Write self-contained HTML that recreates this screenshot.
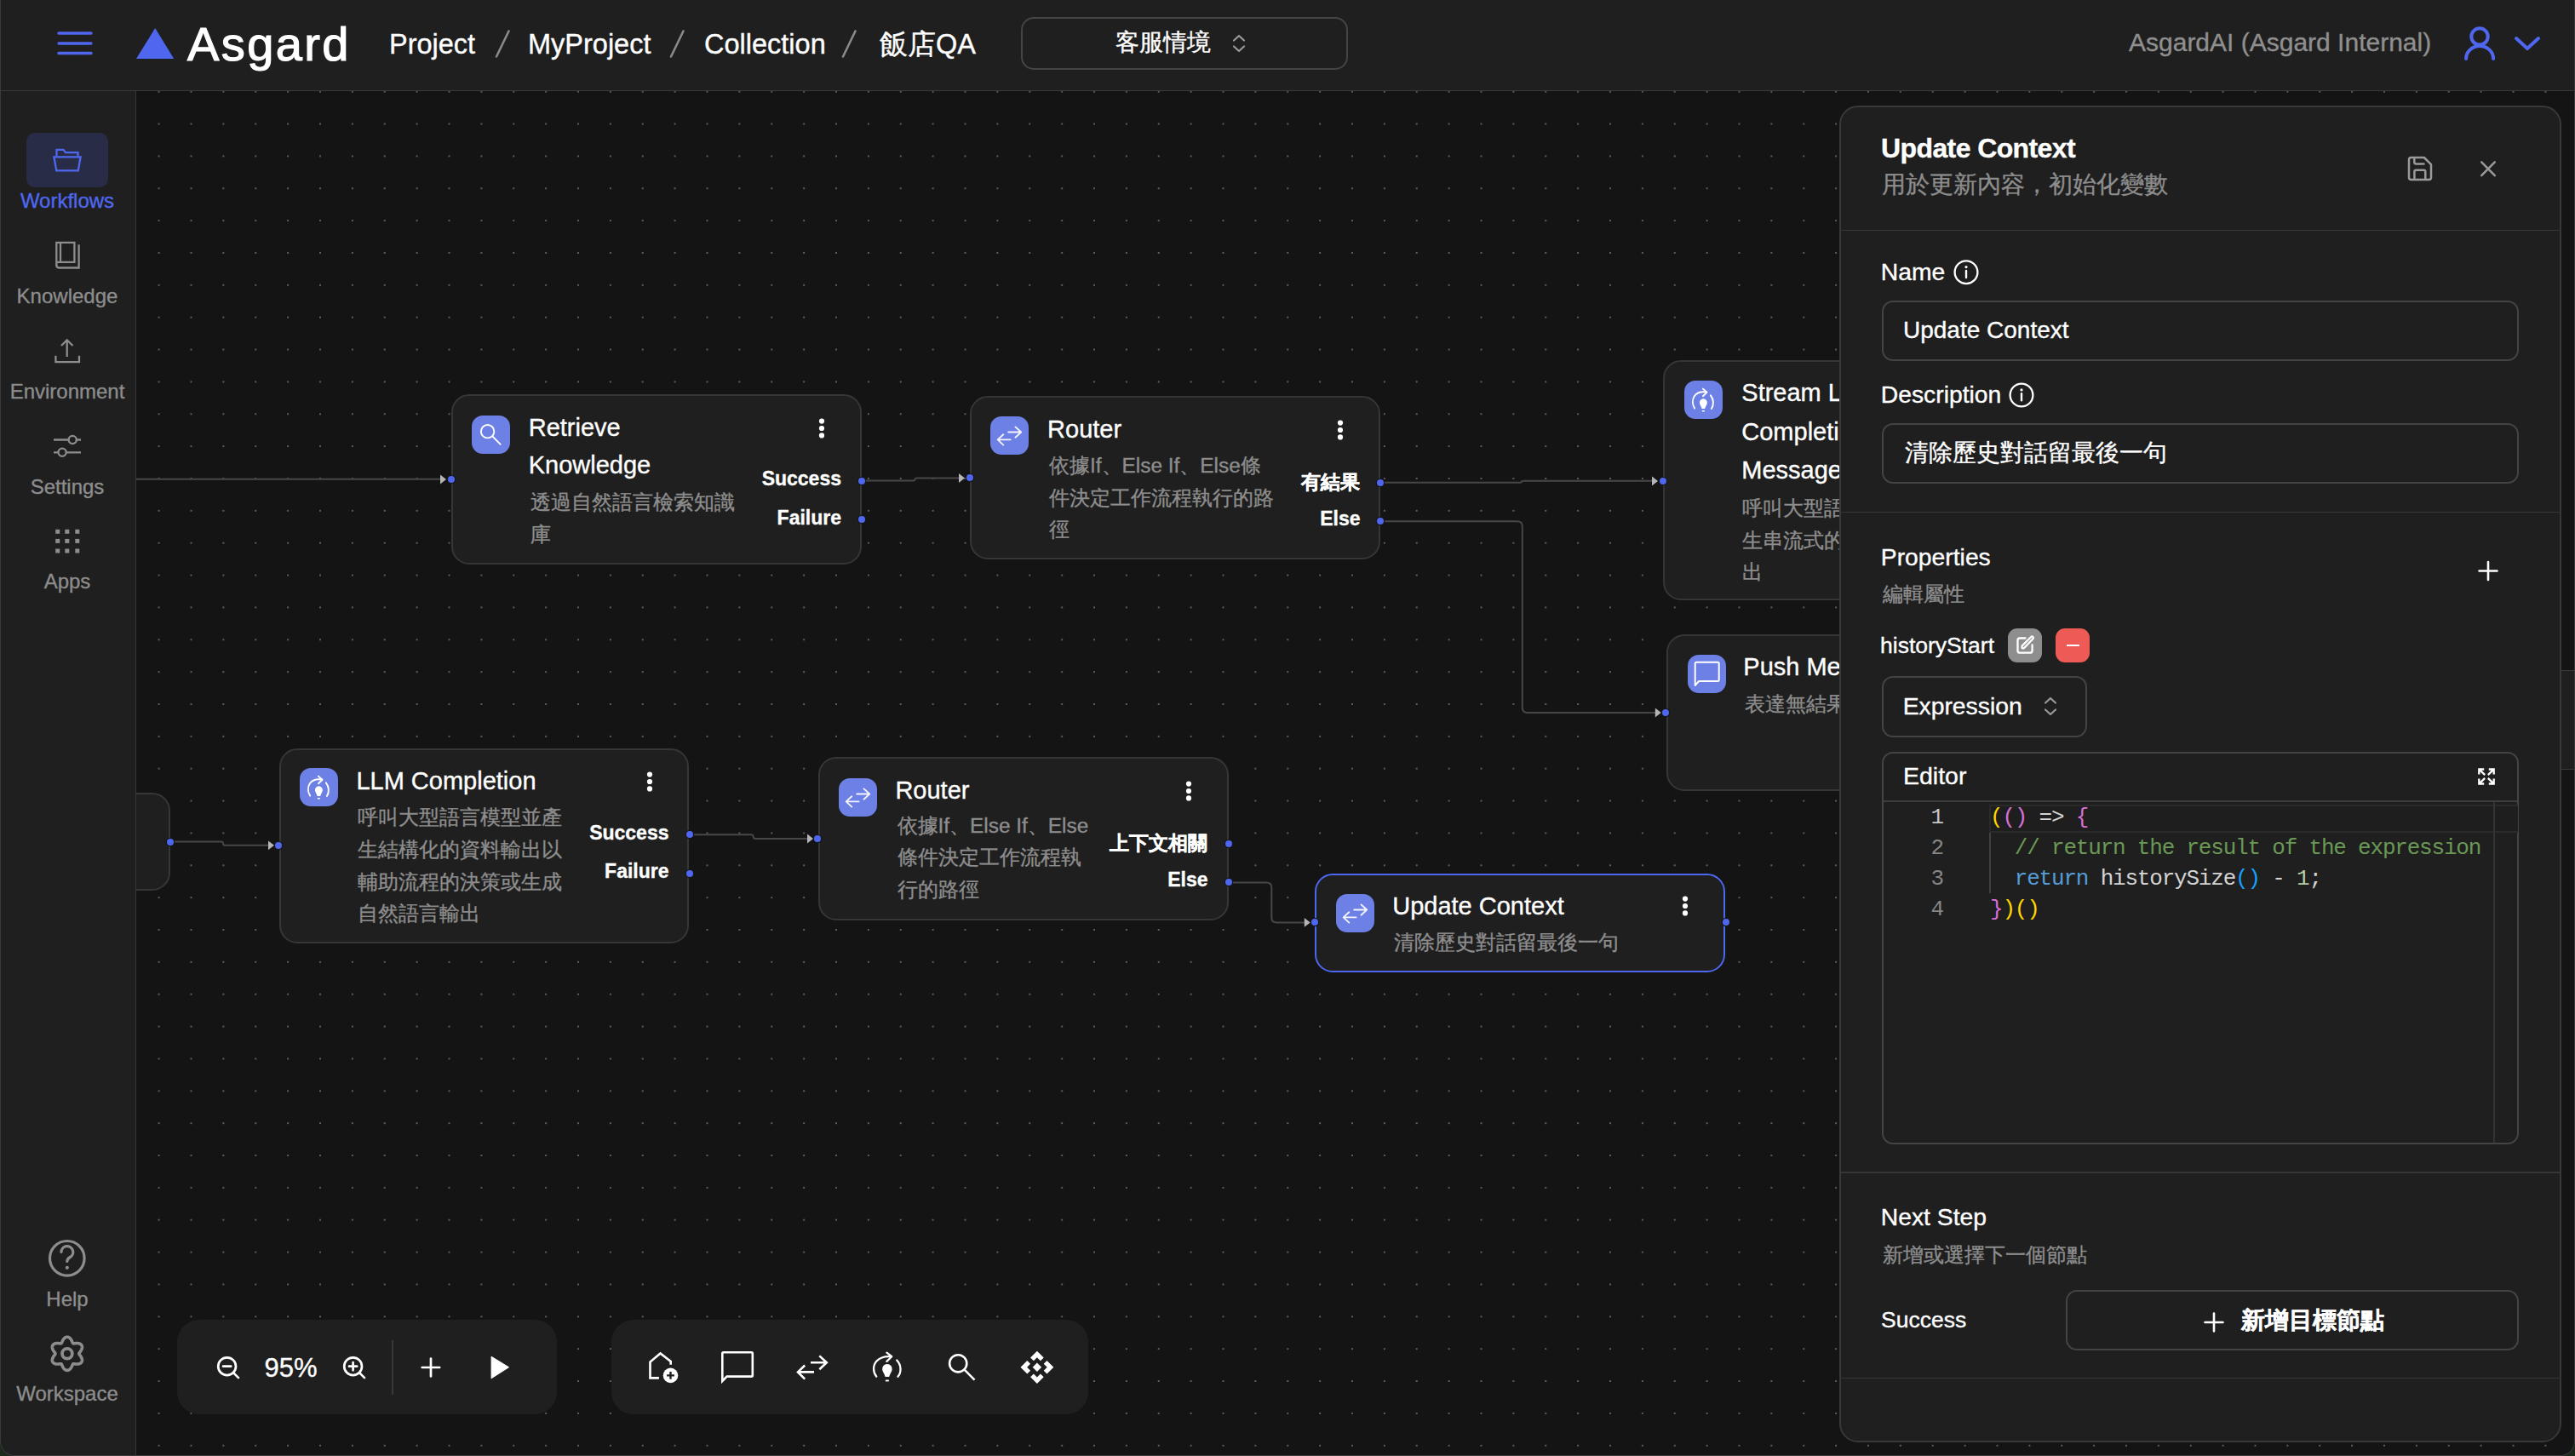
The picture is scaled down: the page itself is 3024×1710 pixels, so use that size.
<!DOCTYPE html>
<html><head><meta charset="utf-8">
<style>
*{box-sizing:border-box;margin:0;padding:0}
html,body{width:3024px;height:1710px;overflow:hidden;background:#1b2a1b}
body{font-family:"Liberation Sans",sans-serif;color:#fff}
.t,.lbl{-webkit-text-stroke:0.35px currentColor}
#root{position:absolute;left:0;top:0;width:3024px;height:1710px;background:#141414;overflow:hidden;border-radius:0 0 17px 17px}
#frame{position:absolute;left:0;top:0;width:3024px;height:1710px;border:1.3px solid #3b3b3b;border-top:none;border-radius:0 0 17px 17px;pointer-events:none}
.a{position:absolute}
.t{position:absolute;white-space:nowrap;line-height:1}
.g{color:#8d8d8d}
#hdr{position:absolute;left:0;top:0;width:3024px;height:107px;background:#1f1f1f;border-bottom:1.5px solid #393939}
#side{position:absolute;left:0;top:107px;width:160px;height:1603px;background:#1f1f1f;border-right:1.5px solid #363636}
#canvas{position:absolute;left:160px;top:107px;width:2864px;height:1603px;
 background-color:#141414;
 background-image:radial-gradient(circle, #5c5c5c 0.9px, rgba(0,0,0,0) 1.3px);
 background-size:37.88px 37.86px;
 background-position:7.7px 19.6px}
.node{position:absolute;background:#1f1f1f;border:2px solid #363636;border-radius:21px}
.ibox{position:absolute;width:45px;height:45px;border-radius:13px;background:#6d80e6}
.ibox svg{position:absolute;left:0;top:0}
.h{position:absolute;width:8px;height:8px;border-radius:50%;background:#4f67ef;margin:-4px 0 0 -4px;box-shadow:0 0 0 1.2px #161616}
.dots{position:absolute;width:6px}
.dots i{display:block;width:6px;height:6px;border-radius:50%;background:#fff;margin-bottom:2.5px}
.lbl{position:absolute;white-space:nowrap;line-height:1;font-weight:700;font-size:23px;text-align:right}
.desc{position:absolute;white-space:nowrap;color:#8d8d8d;font-size:24.4px;line-height:37.6px}
#panel{position:absolute;left:2160px;top:124px;width:848px;height:1570px;background:#1f1f1f;border:2px solid #383838;border-radius:22px;overflow:hidden}
.sep{position:absolute;left:0;width:100%;height:1.5px;background:#363636}
.inp{position:absolute;border:2px solid #444;border-radius:13px}
.tb{position:absolute;background:#1f1f1f;border-radius:26px}
</style></head>
<body>
<div id="root">
 <div id="canvas"></div>
<!--CANVAS-->
<svg class="a" style="left:0;top:0" width="3024" height="1710" viewBox="0 0 3024 1710"><g fill="none" stroke="#474747" stroke-width="2">
<path d="M160,562.8 H518"/>
<path d="M1012,564.6 H1072 Q1074.6,564.6 1074.6,562.8 Q1074.6,561.5 1077,561.5 H1127"/>
<path d="M1621.5,566.7 H1784.5 Q1787,566.7 1787,565.4 Q1787,564.8 1789.5,564.8 H1941"/>
<path d="M1621.5,612.3 H1781.8 Q1787.8,612.3 1787.8,618.3 V831 Q1787.8,837 1793.8,837 H1944.5"/>
<path d="M199.6,988.6 H259.5 Q262,988.6 262,990.7 Q262,992.8 264.5,992.8 H316"/>
<path d="M810,980.2 H882 Q884.6,980.2 884.6,982.5 Q884.6,984.9 887.2,984.9 H949"/>
<path d="M1443,1036.4 H1487.3 Q1493.3,1036.4 1493.3,1042.4 V1077.4 Q1493.3,1083.4 1499.3,1083.4 H1532.5"/>
</g><g fill="#b5b5b5">
<polygon points="517,557.6 524,563 517,568.4"/>
<polygon points="1126,556.1 1133,561.5 1126,566.9"/>
<polygon points="1940,559.6 1947,565 1940,570.4"/>
<polygon points="1943.8,831.6 1950.8,837 1943.8,842.4"/>
<polygon points="315,987.4 322,992.8 315,998.1999999999999"/>
<polygon points="948,979.6 955,985 948,990.4"/>
<polygon points="1531.8,1078.0 1538.8,1083.4 1531.8,1088.8000000000002"/>
</g></svg>
<div class="node" style="left:60px;top:930.8px;width:139.6px;height:115.2px"></div>
<div class="a" style="left:3008px;top:786.5px;width:20px;height:117px;background:#1f1f1f;border-top:1.5px solid #393939;border-bottom:1.5px solid #393939"></div>
<div class="node" style="left:328.2px;top:878.5px;width:481.2px;height:229.7px;"></div>
<div class="ibox" style="left:352px;top:902px"><svg width="45" height="45" viewBox="0 0 45 45"><g fill="none" stroke="#fff" stroke-width="1.9" stroke-linecap="round" stroke-linejoin="round"><path d="M12.2,32.6 C9.4,28.4 9.1,22.6 11.8,18.3 C14.6,14.2 19.8,12.6 26.2,13.5"/><path d="M21.9,9.6 L26.5,13.7 L21.9,18.2"/><path d="M30.9,17.3 C34.4,21.7 35,28.3 31.9,33"/></g><path d="M22.4,21.3 a4.5,4.5 0 0 1 4.4,5.4 c-0.4,1.8 -1.8,3.2 -2.6,6.2 h-3.6 c-0.8,-3 -2.2,-4.4 -2.6,-6.2 a4.5,4.5 0 0 1 4.4,-5.4 z" fill="#fff"/><rect x="20.8" y="35" width="3.2" height="1.6" rx="0.6" fill="#fff"/></svg></div>
<div class="t" style="left:418.4px;top:902.8px;font-size:29px">LLM Completion</div>
<div class="t g" style="left:420.2px;top:948px;font-size:24.4px">呼叫大型語言模型並產</div>
<div class="t g" style="left:420.2px;top:985.8px;font-size:24.4px">生結構化的資料輸出以</div>
<div class="t g" style="left:420.2px;top:1023.6px;font-size:24.4px">輔助流程的決策或生成</div>
<div class="t g" style="left:420.2px;top:1061.4px;font-size:24.4px">自然語言輸出</div>
<div class="lbl" style="left:485.5px;width:300px;top:966.7px">Success</div>
<div class="lbl" style="left:485.5px;width:300px;top:1011.5px">Failure</div>
<svg class="a" style="left:757.5px;top:904px" width="10" height="28" viewBox="0 0 10 28"><circle cx="5" cy="5.6" r="3.1" fill="#fff"/><circle cx="5" cy="14" r="3.1" fill="#fff"/><circle cx="5" cy="22.4" r="3.1" fill="#fff"/></svg>
<div class="node" style="left:529.7px;top:463.2px;width:482px;height:199.4px;"></div>
<div class="ibox" style="left:554px;top:487.5px"><svg width="45" height="45" viewBox="0 0 45 45"><g fill="none" stroke="#fff" stroke-width="1.9" stroke-linecap="round"><circle cx="18.6" cy="18.7" r="7.7"/><line x1="24.3" y1="24.4" x2="33.7" y2="33.8"/></g></svg></div>
<div class="t" style="left:620.7px;top:487.6px;font-size:29px">Retrieve</div>
<div class="t" style="left:620.7px;top:532.3px;font-size:29px">Knowledge</div>
<div class="t g" style="left:622.5px;top:577.5px;font-size:24.4px">透過自然語言檢索知識</div>
<div class="t g" style="left:622.5px;top:615.5px;font-size:24.4px">庫</div>
<div class="lbl" style="left:688px;width:300px;top:551.3px">Success</div>
<div class="lbl" style="left:688px;width:300px;top:596.5px">Failure</div>
<svg class="a" style="left:959.7px;top:488.5px" width="10" height="28" viewBox="0 0 10 28"><circle cx="5" cy="5.6" r="3.1" fill="#fff"/><circle cx="5" cy="14" r="3.1" fill="#fff"/><circle cx="5" cy="22.4" r="3.1" fill="#fff"/></svg>
<div class="node" style="left:1139px;top:465px;width:482.4px;height:192px;"></div>
<div class="ibox" style="left:1163.3px;top:489px"><svg width="45" height="45" viewBox="0 0 45 45"><g fill="none" stroke="#f3f4ff" stroke-width="1.9" stroke-linecap="round" stroke-linejoin="round"><path d="M21.2,18.5 H36.2 M29.5,12.4 L36.2,18.5 L29.5,24.7"/><path d="M23.6,27.4 H8.7 M15.3,21.3 L8.7,27.4 L15.3,33.6"/></g></svg></div>
<div class="t" style="left:1230.1px;top:489.5px;font-size:29px">Router</div>
<div class="t g" style="left:1232px;top:535.3px;font-size:24.4px">依據If、Else If、Else條</div>
<div class="t g" style="left:1232px;top:572.8px;font-size:24.4px">件決定工作流程執行的路</div>
<div class="t g" style="left:1232px;top:610.3px;font-size:24.4px">徑</div>
<div class="lbl" style="left:1297px;width:300px;top:555px">有結果</div>
<div class="lbl" style="left:1297.5px;width:300px;top:598.3px">Else</div>
<svg class="a" style="left:1569px;top:491px" width="10" height="28" viewBox="0 0 10 28"><circle cx="5" cy="5.6" r="3.1" fill="#fff"/><circle cx="5" cy="14" r="3.1" fill="#fff"/><circle cx="5" cy="22.4" r="3.1" fill="#fff"/></svg>
<div class="node" style="left:1953.3px;top:423.4px;width:482px;height:281.8px;"></div>
<div class="ibox" style="left:1977.8px;top:447px"><svg width="45" height="45" viewBox="0 0 45 45"><g fill="none" stroke="#fff" stroke-width="1.9" stroke-linecap="round" stroke-linejoin="round"><path d="M12.2,32.6 C9.4,28.4 9.1,22.6 11.8,18.3 C14.6,14.2 19.8,12.6 26.2,13.5"/><path d="M21.9,9.6 L26.5,13.7 L21.9,18.2"/><path d="M30.9,17.3 C34.4,21.7 35,28.3 31.9,33"/></g><path d="M22.4,21.3 a4.5,4.5 0 0 1 4.4,5.4 c-0.4,1.8 -1.8,3.2 -2.6,6.2 h-3.6 c-0.8,-3 -2.2,-4.4 -2.6,-6.2 a4.5,4.5 0 0 1 4.4,-5.4 z" fill="#fff"/><rect x="20.8" y="35" width="3.2" height="1.6" rx="0.6" fill="#fff"/></svg></div>
<div class="t" style="left:2045.3px;top:447.3px;font-size:29px">Stream LLM</div>
<div class="t" style="left:2045.3px;top:492.5px;font-size:29px">Completion</div>
<div class="t" style="left:2045.3px;top:537.9px;font-size:29px">Message</div>
<div class="t g" style="left:2045.5px;top:584.5px;font-size:24.4px">呼叫大型語言模型並產</div>
<div class="t g" style="left:2045.5px;top:622.5px;font-size:24.4px">生串流式的資料輸</div>
<div class="t g" style="left:2045.5px;top:660.2px;font-size:24.4px">出</div>
<div class="node" style="left:1957px;top:744.5px;width:482px;height:184.5px;"></div>
<div class="ibox" style="left:1981.6px;top:769px"><svg width="45" height="45" viewBox="0 0 45 45"><path d="M8.7,36 V10.2 Q8.7,8.7 10.2,8.7 H35.2 Q36.7,8.7 36.7,10.2 V29.4 Q36.7,30.9 35.2,30.9 H13.2 Z" fill="none" stroke="#fff" stroke-width="2" stroke-linejoin="round"/></svg></div>
<div class="t" style="left:2047.3px;top:768.5px;font-size:29px">Push Message</div>
<div class="t g" style="left:2049.3px;top:815px;font-size:24.4px">表達無結果的訊息</div>
<div class="node" style="left:961px;top:889px;width:481.5px;height:192px;"></div>
<div class="ibox" style="left:985px;top:913.6px"><svg width="45" height="45" viewBox="0 0 45 45"><g fill="none" stroke="#f3f4ff" stroke-width="1.9" stroke-linecap="round" stroke-linejoin="round"><path d="M21.2,18.5 H36.2 M29.5,12.4 L36.2,18.5 L29.5,24.7"/><path d="M23.6,27.4 H8.7 M15.3,21.3 L8.7,27.4 L15.3,33.6"/></g></svg></div>
<div class="t" style="left:1051.4px;top:913.5px;font-size:29px">Router</div>
<div class="t g" style="left:1053.5px;top:957.5px;font-size:24.4px">依據If、Else If、Else</div>
<div class="t g" style="left:1053.5px;top:995.3px;font-size:24.4px">條件決定工作流程執</div>
<div class="t g" style="left:1053.5px;top:1033.1px;font-size:24.4px">行的路徑</div>
<div class="lbl" style="left:1118px;width:300px;top:978.5px">上下文相關</div>
<div class="lbl" style="left:1118.5px;width:300px;top:1022.2px">Else</div>
<svg class="a" style="left:1391px;top:914.5px" width="10" height="28" viewBox="0 0 10 28"><circle cx="5" cy="5.6" r="3.1" fill="#fff"/><circle cx="5" cy="14" r="3.1" fill="#fff"/><circle cx="5" cy="22.4" r="3.1" fill="#fff"/></svg>
<div class="node" style="left:1544.3px;top:1025.5px;width:482.2px;height:116.1px;border:2px solid #4d68ee;"></div>
<div class="ibox" style="left:1568.6px;top:1049.6px"><svg width="45" height="45" viewBox="0 0 45 45"><g fill="none" stroke="#f3f4ff" stroke-width="1.9" stroke-linecap="round" stroke-linejoin="round"><path d="M21.2,18.5 H36.2 M29.5,12.4 L36.2,18.5 L29.5,24.7"/><path d="M23.6,27.4 H8.7 M15.3,21.3 L8.7,27.4 L15.3,33.6"/></g></svg></div>
<div class="t" style="left:1635.2px;top:1049.5px;font-size:29px">Update Context</div>
<div class="t g" style="left:1637.2px;top:1095.1px;font-size:24.4px">清除歷史對話留最後一句</div>
<svg class="a" style="left:1974.3px;top:1050.4px" width="10" height="28" viewBox="0 0 10 28"><circle cx="5" cy="5.6" r="3.1" fill="#fff"/><circle cx="5" cy="14" r="3.1" fill="#fff"/><circle cx="5" cy="22.4" r="3.1" fill="#fff"/></svg>
<div class="h" style="left:529.5px;top:563px"></div>
<div class="h" style="left:1012px;top:564.5px"></div>
<div class="h" style="left:1012px;top:610px"></div>
<div class="h" style="left:1138.5px;top:561.4px"></div>
<div class="h" style="left:1621.4px;top:566.8px"></div>
<div class="h" style="left:1621.4px;top:612px"></div>
<div class="h" style="left:1952.5px;top:565px"></div>
<div class="h" style="left:1956px;top:837px"></div>
<div class="h" style="left:199.6px;top:988.6px"></div>
<div class="h" style="left:327px;top:992.8px"></div>
<div class="h" style="left:810px;top:980px"></div>
<div class="h" style="left:810px;top:1025.6px"></div>
<div class="h" style="left:960px;top:985.3px"></div>
<div class="h" style="left:1443px;top:990.5px"></div>
<div class="h" style="left:1443px;top:1036px"></div>
<div class="h" style="left:1543.5px;top:1083.4px"></div>
<div class="h" style="left:2026.5px;top:1083.4px"></div>
<div class="tb" style="left:208.3px;top:1549.6px;width:445.7px;height:111.8px"></div>
<div class="tb" style="left:718px;top:1549.6px;width:559.5px;height:111.8px"></div>
<div class="a" style="left:460px;top:1574.3px;width:2px;height:63.4px;background:#383838"></div>
<div class="t" style="left:310.5px;top:1591px;font-size:31px">95%</div>
<svg class="a" style="left:0;top:0" width="1300" height="1710" viewBox="0 0 1300 1710">
 <g fill="none" stroke="#fff" stroke-width="2.7" stroke-linecap="round" stroke-linejoin="round">
  <circle cx="266.6" cy="1604.7" r="10.4"/><path d="M274.5,1612.6 L280,1618.1 M262,1604.7 H271.2"/>
  <circle cx="414.6" cy="1604.7" r="10.4"/><path d="M422.5,1612.6 L428,1618.1 M410,1604.7 H419.2 M414.6,1600.1 V1609.3"/>
  <path d="M495.7,1606 H516.2 M506,1595.6 V1616.4"/>
 </g>
 <path d="M577.2,1593.5 L597.2,1605.8 L577.2,1618.6 Z" fill="#fff" stroke="#fff" stroke-width="1.2" stroke-linejoin="round"/>
 <g fill="none" stroke="#fff" stroke-width="2.6" stroke-linejoin="miter">
  <path d="M773.9,1618.4 H763.5 V1599.5 L775.5,1589.5 L787.7,1599 V1602.8"/>
  <path d="M848.3,1622 V1589.6 Q848.3,1588.3 849.6,1588.3 H882.5 Q883.8,1588.3 883.8,1589.6 V1615.3 Q883.8,1616.6 882.5,1616.6 H853.6 Z"/>
  <path d="M952,1600.3 H970.8 M962.3,1592.4 L970.8,1600.3 L962.3,1608.2"/>
  <path d="M956,1611.4 H937 M945.2,1603.5 L937,1611.4 L945.2,1619.6"/>
  <circle cx="1125.2" cy="1601.3" r="10.1"/><path d="M1132.6,1608.7 L1144.5,1620.6"/>
 </g>
 <circle cx="787.5" cy="1615.4" r="8.8" fill="#fff"/>
 <path d="M787.5,1611 V1619.8 M783.1,1615.4 H791.9" stroke="#1f1f1f" stroke-width="2.4"/>
 <g fill="none" stroke="#fff" stroke-width="2.3" stroke-linecap="round" stroke-linejoin="round">
  <path d="M1029.3,1616.7 C1025,1611.5 1024.8,1603.6 1029.5,1598.5 C1033.6,1594.2 1040,1592.6 1046.8,1593.2"/>
  <path d="M1041.4,1588.6 L1047.2,1593.2 L1041.4,1598.9"/>
  <path d="M1053.2,1597.5 C1058.6,1603 1058.8,1611.8 1054.5,1616.8"/>
 </g>
 <path d="M1041.9,1602 a5.8,5.8 0 0 1 5.7,6.9 c-0.5,2.4 -2.4,4.2 -3.4,8.2 h-4.6 c-1,-4 -2.9,-5.8 -3.4,-8.2 a5.8,5.8 0 0 1 5.7,-6.9 z" fill="#fff"/>
 <rect x="1039.8" y="1620.4" width="4.2" height="2.2" rx="0.8" fill="#fff"/>
 <g fill="#fff">
  <polygon points="1217.9,1586.7 1225.7,1594.5 1221.9,1598.3 1217.9,1594.3 1213.9,1598.3 1210.1,1594.5"/>
  <polygon points="1217.9,1625 1225.7,1617.2 1221.9,1613.4 1217.9,1617.4 1213.9,1613.4 1210.1,1617.2"/>
  <polygon points="1198.5,1605.8 1206.3,1598 1210.1,1601.8 1206.1,1605.8 1210.1,1609.8 1206.3,1613.6"/>
  <polygon points="1237.3,1605.8 1229.5,1598 1225.7,1601.8 1229.7,1605.8 1225.7,1609.8 1229.5,1613.6"/>
  <polygon points="1217.9,1600.6 1223.1,1605.8 1217.9,1611 1212.7,1605.8"/>
 </g>
</svg>
<!--/CANVAS-->
<div id="hdr">
  <svg class="a" style="left:66px;top:36px" width="44" height="30" viewBox="0 0 44 30"><g stroke="#4f67ef" stroke-width="3.4" stroke-linecap="round"><line x1="3" y1="3" x2="41" y2="3"/><line x1="3" y1="15" x2="41" y2="15"/><line x1="3" y1="26.5" x2="41" y2="26.5"/></g></svg>
  <svg class="a" style="left:160px;top:33px" width="45" height="37" viewBox="0 0 45 37"><polygon points="22.2,0 44.2,36 0,36" fill="#4f67ef"/></svg>
  <div class="t" style="left:220px;top:23.6px;font-size:56px;letter-spacing:2.4px;-webkit-text-stroke:1.2px #fff">Asgard</div>
  <div class="t" style="left:457px;top:36px;font-size:32.5px">Project</div>
  <svg class="a" style="left:578px;top:33px" width="24" height="38"><line x1="19.5" y1="3.5" x2="5" y2="33.5" stroke="#8a8a8a" stroke-width="2.6" stroke-linecap="round"/></svg>
  <div class="t" style="left:620px;top:36px;font-size:32.5px">MyProject</div>
  <svg class="a" style="left:783px;top:33px" width="24" height="38"><line x1="19.5" y1="3.5" x2="5" y2="33.5" stroke="#8a8a8a" stroke-width="2.6" stroke-linecap="round"/></svg>
  <div class="t" style="left:827px;top:36px;font-size:32.5px">Collection</div>
  <svg class="a" style="left:985px;top:33px" width="24" height="38"><line x1="19.5" y1="3.5" x2="5" y2="33.5" stroke="#8a8a8a" stroke-width="2.6" stroke-linecap="round"/></svg>
  <div class="t" style="left:1033px;top:36px;font-size:32.5px">飯店QA</div>
  <div class="a" style="left:1199px;top:19.5px;width:384px;height:62px;border:2px solid #454545;border-radius:15px"></div>
  <div class="t" style="left:1310px;top:36px;font-size:28px">客服情境</div>
  <svg class="a" style="left:1446px;top:40px" width="18" height="22" viewBox="0 0 18 22"><g fill="none" stroke="#9a9a9a" stroke-width="2.2" stroke-linecap="round" stroke-linejoin="round"><polyline points="3,7.5 9,2 15,7.5"/><polyline points="3,14.5 9,20 15,14.5"/></g></svg>
  <div class="t" style="left:2500px;top:35px;font-size:30px;color:#8f8f8f">AsgardAI (Asgard Internal)</div>
  <svg class="a" style="left:2890px;top:29px" width="44" height="44" viewBox="0 0 44 44"><g fill="none" stroke="#4f67ef" stroke-width="4" stroke-linecap="round"><circle cx="22" cy="13.9" r="9.7"/><path d="M6.1,40 A16,15 0 0 1 38.1,40"/></g></svg>
  <svg class="a" style="left:2950px;top:40px" width="36" height="22" viewBox="0 0 36 22"><polyline points="5,5 18,17 31,5" fill="none" stroke="#4f67ef" stroke-width="4" stroke-linecap="round" stroke-linejoin="round"/></svg>
 </div>
 <div id="side">
  <div class="a" style="left:31px;top:49px;width:96px;height:64px;border-radius:10px;background:#282c46"></div>
 </div>
 <div class="a" style="left:0;top:0;width:160px;height:1710px">
  <svg class="a" style="left:0;top:0" width="160" height="1710" viewBox="0 0 160 1710">
   <g fill="none" stroke="#5068ef" stroke-width="2.3" stroke-linejoin="miter">
    <path d="M66.5,183.5 V175.8 H74.4 L77,179.2 H91.5 V183.5"/>
    <path d="M63.4,184.3 H94.6 L91.8,200.4 H66.3 Z"/>
   </g>
   <g fill="none" stroke="#8d8d8d" stroke-width="2.3">
    <path d="M66.3,312 V284.9 H87.4 V307.9 H68.5 Q66.3,307.9 66.3,310.5"/>
    <line x1="71" y1="285" x2="71" y2="307.9"/>
    <path d="M92.6,287.3 V314.5 H69 Q66.3,314.5 66.3,311"/>
    <path d="M78.7,419 V399.5 M72,406 L78.7,399.3 L85.5,406"/>
    <path d="M65.4,417.8 V425.2 H93 V417.8"/>
    <path d="M63,516.5 H80.6 M89.8,516.5 H95 M63,531.3 H68.5 M77.7,531.3 H95"/>
    <circle cx="85.2" cy="516.5" r="4.6"/>
    <circle cx="73.1" cy="531.3" r="4.6"/>
   </g>
   <g fill="#8d8d8d">
    <rect x="65.2" y="621.8" width="5" height="5"/><rect x="76.3" y="621.8" width="5" height="5"/><rect x="88.3" y="621.8" width="5" height="5"/>
    <rect x="65.2" y="632.9" width="5" height="5"/><rect x="76.3" y="632.9" width="5" height="5"/><rect x="88.3" y="632.9" width="5" height="5"/>
    <rect x="65.2" y="644.5" width="5" height="5"/><rect x="76.3" y="644.5" width="5" height="5"/><rect x="88.3" y="644.5" width="5" height="5"/>
   </g>
   <g fill="none" stroke="#8d8d8d" stroke-width="3.2" stroke-linecap="round" stroke-linejoin="round">
    <circle cx="78.8" cy="1477.8" r="20.3"/>
    <path d="M72,1470.5 a6.9,6.9 0 1 1 10.3,6 c-2.4,1.3 -3.5,2.7 -3.5,5"/>
    <circle cx="78.9" cy="1589.8" r="5.9" stroke-width="3.8"/>
    <polygon points="92.80,1589.80 92.87,1590.04 92.98,1590.29 93.13,1590.55 93.31,1590.81 93.49,1591.08 93.70,1591.36 93.91,1591.64 94.13,1591.94 94.35,1592.25 94.57,1592.56 94.79,1592.89 95.01,1593.22 95.22,1593.57 95.41,1593.92 95.60,1594.27 95.77,1594.64 95.93,1595.01 96.06,1595.38 96.18,1595.75 96.28,1596.13 96.35,1596.50 96.40,1596.87 96.43,1597.24 96.43,1597.60 96.40,1597.96 96.35,1598.31 96.27,1598.65 96.16,1598.98 96.03,1599.30 95.87,1599.60 95.69,1599.89 95.48,1600.16 95.25,1600.42 95.00,1600.66 94.72,1600.88 94.42,1601.08 94.11,1601.26 93.78,1601.42 93.43,1601.56 93.07,1601.69 92.69,1601.79 92.31,1601.88 91.92,1601.94 91.53,1601.99 91.13,1602.03 90.72,1602.04 90.32,1602.05 89.92,1602.04 89.52,1602.02 89.13,1601.99 88.74,1601.96 88.37,1601.92 88.00,1601.88 87.65,1601.84 87.30,1601.80 86.97,1601.77 86.66,1601.75 86.37,1601.75 86.09,1601.77 85.85,1601.84 85.67,1602.02 85.52,1602.24 85.37,1602.50 85.23,1602.78 85.09,1603.08 84.95,1603.39 84.81,1603.72 84.66,1604.06 84.51,1604.40 84.34,1604.76 84.17,1605.11 83.99,1605.46 83.80,1605.81 83.59,1606.16 83.37,1606.50 83.15,1606.83 82.91,1607.15 82.65,1607.45 82.39,1607.74 82.11,1608.01 81.82,1608.26 81.53,1608.49 81.22,1608.70 80.91,1608.88 80.58,1609.04 80.25,1609.17 79.92,1609.27 79.58,1609.34 79.24,1609.39 78.90,1609.40 78.56,1609.39 78.22,1609.34 77.88,1609.27 77.55,1609.17 77.22,1609.04 76.89,1608.88 76.58,1608.70 76.27,1608.49 75.98,1608.26 75.69,1608.01 75.41,1607.74 75.15,1607.45 74.89,1607.15 74.65,1606.83 74.43,1606.50 74.21,1606.16 74.00,1605.81 73.81,1605.46 73.63,1605.11 73.46,1604.76 73.29,1604.40 73.14,1604.06 72.99,1603.72 72.85,1603.39 72.71,1603.08 72.57,1602.78 72.43,1602.50 72.28,1602.24 72.13,1602.02 71.95,1601.84 71.71,1601.77 71.43,1601.75 71.14,1601.75 70.83,1601.77 70.50,1601.80 70.15,1601.84 69.80,1601.88 69.43,1601.92 69.06,1601.96 68.67,1601.99 68.28,1602.02 67.88,1602.04 67.48,1602.05 67.08,1602.04 66.67,1602.03 66.27,1601.99 65.88,1601.94 65.49,1601.88 65.11,1601.79 64.73,1601.69 64.37,1601.56 64.02,1601.42 63.69,1601.26 63.38,1601.08 63.08,1600.88 62.80,1600.66 62.55,1600.42 62.32,1600.16 62.11,1599.89 61.93,1599.60 61.77,1599.30 61.64,1598.98 61.53,1598.65 61.45,1598.31 61.40,1597.96 61.37,1597.60 61.37,1597.24 61.40,1596.87 61.45,1596.50 61.52,1596.13 61.62,1595.75 61.74,1595.38 61.87,1595.01 62.03,1594.64 62.20,1594.27 62.39,1593.92 62.58,1593.57 62.79,1593.22 63.01,1592.89 63.23,1592.56 63.45,1592.25 63.67,1591.94 63.89,1591.64 64.10,1591.36 64.31,1591.08 64.49,1590.81 64.67,1590.55 64.82,1590.29 64.93,1590.04 65.00,1589.80 64.93,1589.56 64.82,1589.31 64.67,1589.05 64.49,1588.79 64.31,1588.52 64.10,1588.24 63.89,1587.96 63.67,1587.66 63.45,1587.35 63.23,1587.04 63.01,1586.71 62.79,1586.38 62.58,1586.03 62.39,1585.68 62.20,1585.33 62.03,1584.96 61.87,1584.59 61.74,1584.22 61.62,1583.85 61.52,1583.47 61.45,1583.10 61.40,1582.73 61.37,1582.36 61.37,1582.00 61.40,1581.64 61.45,1581.29 61.53,1580.95 61.64,1580.62 61.77,1580.30 61.93,1580.00 62.11,1579.71 62.32,1579.44 62.55,1579.18 62.80,1578.94 63.08,1578.72 63.38,1578.52 63.69,1578.34 64.02,1578.18 64.37,1578.04 64.73,1577.91 65.11,1577.81 65.49,1577.72 65.88,1577.66 66.27,1577.61 66.67,1577.57 67.08,1577.56 67.48,1577.55 67.88,1577.56 68.28,1577.58 68.67,1577.61 69.06,1577.64 69.43,1577.68 69.80,1577.72 70.15,1577.76 70.50,1577.80 70.83,1577.83 71.14,1577.85 71.43,1577.85 71.71,1577.83 71.95,1577.76 72.13,1577.58 72.28,1577.36 72.43,1577.10 72.57,1576.82 72.71,1576.52 72.85,1576.21 72.99,1575.88 73.14,1575.54 73.29,1575.20 73.46,1574.84 73.63,1574.49 73.81,1574.14 74.00,1573.79 74.21,1573.44 74.43,1573.10 74.65,1572.77 74.89,1572.45 75.15,1572.15 75.41,1571.86 75.69,1571.59 75.98,1571.34 76.27,1571.11 76.58,1570.90 76.89,1570.72 77.22,1570.56 77.55,1570.43 77.88,1570.33 78.22,1570.26 78.56,1570.21 78.90,1570.20 79.24,1570.21 79.58,1570.26 79.92,1570.33 80.25,1570.43 80.58,1570.56 80.91,1570.72 81.22,1570.90 81.53,1571.11 81.82,1571.34 82.11,1571.59 82.39,1571.86 82.65,1572.15 82.91,1572.45 83.15,1572.77 83.37,1573.10 83.59,1573.44 83.80,1573.79 83.99,1574.14 84.17,1574.49 84.34,1574.84 84.51,1575.20 84.66,1575.54 84.81,1575.88 84.95,1576.21 85.09,1576.52 85.23,1576.82 85.37,1577.10 85.52,1577.36 85.67,1577.58 85.85,1577.76 86.09,1577.83 86.37,1577.85 86.66,1577.85 86.97,1577.83 87.30,1577.80 87.65,1577.76 88.00,1577.72 88.37,1577.68 88.74,1577.64 89.13,1577.61 89.52,1577.58 89.92,1577.56 90.32,1577.55 90.72,1577.56 91.13,1577.57 91.53,1577.61 91.92,1577.66 92.31,1577.72 92.69,1577.81 93.07,1577.91 93.43,1578.04 93.78,1578.18 94.11,1578.34 94.42,1578.52 94.72,1578.72 95.00,1578.94 95.25,1579.18 95.48,1579.44 95.69,1579.71 95.87,1580.00 96.03,1580.30 96.16,1580.62 96.27,1580.95 96.35,1581.29 96.40,1581.64 96.43,1582.00 96.43,1582.36 96.40,1582.73 96.35,1583.10 96.28,1583.47 96.18,1583.85 96.06,1584.22 95.93,1584.59 95.77,1584.96 95.60,1585.33 95.41,1585.68 95.22,1586.03 95.01,1586.38 94.79,1586.71 94.57,1587.04 94.35,1587.35 94.13,1587.66 93.91,1587.96 93.70,1588.24 93.49,1588.52 93.31,1588.79 93.13,1589.05 92.98,1589.31 92.87,1589.56" stroke-width="3.6"/>
   </g>
   <circle cx="78.8" cy="1488.8" r="2.1" fill="#8d8d8d"/>
  </svg>
  <div class="t" style="left:0;width:158px;text-align:center;top:223.7px;font-size:24px;color:#5068ef">Workflows</div>
  <div class="t g" style="left:0;width:158px;text-align:center;top:335.7px;font-size:24px">Knowledge</div>
  <div class="t g" style="left:0;width:158px;text-align:center;top:448.2px;font-size:24px">Environment</div>
  <div class="t g" style="left:0;width:158px;text-align:center;top:559.7px;font-size:24px">Settings</div>
  <div class="t g" style="left:0;width:158px;text-align:center;top:671.2px;font-size:24px">Apps</div>
  <div class="t g" style="left:0;width:158px;text-align:center;top:1513.7px;font-size:24px">Help</div>
  <div class="t g" style="left:0;width:158px;text-align:center;top:1625.4px;font-size:24px">Workspace</div>
 </div>

 <div id="panel"></div>
 <div class="a" style="left:2162px;top:269.5px;width:843.5px;height:1.5px;background:#363636"></div>
 <div class="a" style="left:2162px;top:600.5px;width:843.5px;height:1.5px;background:#363636"></div>
 <div class="a" style="left:2162px;top:1376px;width:843.5px;height:1.5px;background:#363636"></div>
 <div class="a" style="left:2162px;top:1617.7px;width:843.5px;height:1.5px;background:#363636"></div>
 <div class="t" style="left:2209px;top:157.9px;font-size:32px;font-weight:700;letter-spacing:-0.6px">Update Context</div>
 <div class="t g" style="left:2210px;top:202.5px;font-size:28px">用於更新內容，初始化變數</div>
 <svg class="a" style="left:2820px;top:176px" width="120" height="44" viewBox="2820 176 120 44">
  <g fill="none" stroke="#9a9a9a" stroke-width="2.5" stroke-linejoin="round" stroke-linecap="round">
   <path d="M2831.5,185 H2846.8 L2855,193.2 V208.5 Q2855,211 2852.5,211 H2831.5 Q2829,211 2829,208.5 V187.5 Q2829,185 2831.5,185 Z"/>
   <path d="M2835.3,185.5 V190.5 Q2835.3,192.4 2837.2,192.4 H2846.5"/>
   <path d="M2835.4,210.5 V201.6 Q2835.4,199.7 2837.3,199.7 H2846.4 Q2848.3,199.7 2848.3,201.6 V210.5"/>
   <path d="M2914.2,190.3 L2929.8,206.1 M2929.8,190.3 L2914.2,206.1"/>
  </g>
 </svg>
 <div class="t" style="left:2208.8px;top:305px;font-size:28.3px">Name</div>
 <svg class="a" style="left:2292px;top:302px" width="36" height="36" viewBox="0 0 36 36"><circle cx="17" cy="17.7" r="13.4" fill="none" stroke="#fff" stroke-width="2.3"/><circle cx="17" cy="11.6" r="1.6" fill="#fff"/><line x1="17" y1="16" x2="17" y2="24" stroke="#fff" stroke-width="2.4" stroke-linecap="round"/></svg>
 <div class="inp" style="left:2210px;top:352.5px;width:748px;height:71px"></div>
 <div class="t" style="left:2235px;top:373.6px;font-size:28px">Update Context</div>
 <div class="t" style="left:2208.8px;top:449px;font-size:28.3px">Description</div>
 <svg class="a" style="left:2357px;top:446px" width="36" height="36" viewBox="0 0 36 36"><circle cx="17" cy="18" r="13.4" fill="none" stroke="#fff" stroke-width="2.3"/><circle cx="17" cy="11.9" r="1.6" fill="#fff"/><line x1="17" y1="16.3" x2="17" y2="24.3" stroke="#fff" stroke-width="2.4" stroke-linecap="round"/></svg>
 <div class="inp" style="left:2210px;top:496.5px;width:748px;height:71px"></div>
 <div class="t" style="left:2236.5px;top:518px;font-size:28px">清除歷史對話留最後一句</div>
 <div class="t" style="left:2208.8px;top:639.5px;font-size:28.3px">Properties</div>
 <div class="t g" style="left:2210.5px;top:686px;font-size:24px">編輯屬性</div>
 <svg class="a" style="left:2905px;top:654px" width="34" height="34" viewBox="0 0 34 34"><path d="M17,6 V27 M6.5,16.5 H27.5" stroke="#fff" stroke-width="2.6" stroke-linecap="round"/></svg>
 <div class="t" style="left:2208px;top:745px;font-size:26.5px">historyStart</div>
 <div class="a" style="left:2358px;top:738px;width:39.7px;height:40px;border-radius:11px;background:#8e8e8e"></div>
 <svg class="a" style="left:2358px;top:738px" width="40" height="40" viewBox="2358 738 40 40"><g fill="none" stroke="#fff" stroke-width="2.3" stroke-linecap="round" stroke-linejoin="round"><path d="M2378.5,749.5 H2372 Q2369.5,749.5 2369.5,752 V764.2 Q2369.5,766.7 2372,766.7 H2384 Q2386.6,766.7 2386.6,764.2 V757.5"/><path d="M2374.6,761.3 V758.6 L2385.2,748 Q2386.3,746.9 2387.4,748 Q2388.5,749.1 2387.4,750.2 L2376.9,761.3 Z"/></g></svg>
 <div class="a" style="left:2414px;top:738px;width:39.7px;height:40px;border-radius:11px;background:#ee5a56"></div>
 <div class="a" style="left:2426.5px;top:756.8px;width:15px;height:2.6px;background:#fff"></div>
 <div class="inp" style="left:2210px;top:794px;width:240.5px;height:71.5px"></div>
 <div class="t" style="left:2234.7px;top:815px;font-size:28.3px">Expression</div>
 <svg class="a" style="left:2398px;top:817px" width="20" height="26" viewBox="0 0 20 26"><g fill="none" stroke="#9a9a9a" stroke-width="2.2" stroke-linecap="round" stroke-linejoin="round"><polyline points="4,8.5 10,3 16,8.5"/><polyline points="4,16.5 10,22 16,16.5"/></g></svg>
 <div class="inp" style="left:2210px;top:882.5px;width:748px;height:461px"></div>
 <div class="t" style="left:2235px;top:897.4px;font-size:28.5px">Editor</div>
 <div class="a" style="left:2212px;top:940px;width:744px;height:1.5px;background:#3d3d3d"></div>
 <svg class="a" style="left:2905px;top:898px" width="30" height="30" viewBox="2905 898 30 30"><g fill="none" stroke="#fff" stroke-width="2.3" stroke-linecap="butt" stroke-linejoin="miter"><path d="M2911.3,909.4 V903.5 H2917.2 M2912,904.2 L2918.2,910.2"/><path d="M2928.7,909.4 V903.5 H2922.8 M2928,904.2 L2921.8,910.2"/><path d="M2911.3,914.6 V920.5 H2917.2 M2912,919.8 L2918.2,913.8"/><path d="M2928.7,914.6 V920.5 H2922.8 M2928,919.8 L2921.8,913.8"/></g></svg>
 <div class="a" style="left:2335.6px;top:944.5px;width:621px;height:33.5px;border:2.5px solid #2a2a2a;border-right:none;background:#1e1e1e"></div>
 <div class="a" style="left:2928px;top:942px;width:1.5px;height:400px;background:#333"></div>
 <div class="a" style="left:2336.2px;top:978px;width:1.6px;height:71px;background:#404040"></div>
 <div class="a" style="left:2240px;top:0;width:0;height:0"></div>
 <div class="a" style="left:2240px;top:942px;width:43px;font-family:'Liberation Mono',monospace;font-size:26px;line-height:36px;text-align:right;color:#858585;white-space:pre"><span style="color:#c6c6c6">1</span>
2
3
4</div>
 <div class="a" style="left:2337px;top:942px;font-family:'Liberation Mono',monospace;font-size:26px;letter-spacing:-1.2px;line-height:36px;white-space:pre;color:#d4d4d4"><span style="color:#ffd700">(</span><span style="color:#da70d6">()</span> =&gt; <span style="color:#da70d6">{</span>
  <span style="color:#6a9955">// return the result of the expression</span>
  <span style="color:#569cd6">return</span> historySize<span style="color:#179fff">()</span> - <span style="color:#b5cea8">1</span>;
<span style="color:#da70d6">}</span><span style="color:#ffd700">)()</span></div>
 <div class="t" style="left:2208.8px;top:1415px;font-size:28.3px">Next Step</div>
 <div class="t g" style="left:2210.5px;top:1461.5px;font-size:24px">新增或選擇下一個節點</div>
 <div class="t" style="left:2209px;top:1536.6px;font-size:26.5px">Success</div>
 <div class="inp" style="left:2426px;top:1514.5px;width:532px;height:71px"></div>
 <svg class="a" style="left:2585px;top:1538px" width="30" height="30" viewBox="0 0 30 30"><path d="M15,4.5 V25.5 M4.5,15 H25.5" stroke="#fff" stroke-width="2.6" stroke-linecap="round"/></svg>
 <div class="t" style="left:2632px;top:1536.5px;font-size:28px;font-weight:700">新增目標節點</div>
</div>
<div id="frame"></div>
</body></html>
